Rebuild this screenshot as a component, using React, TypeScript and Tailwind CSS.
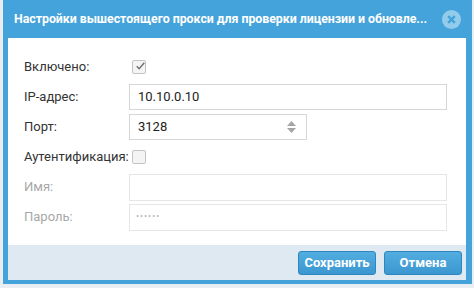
const font = { fontFamily: "Roboto, 'Noto Sans', sans-serif" };

function Row({
  label,
  disabled,
  children,
}: {
  label: string;
  disabled?: boolean;
  children: React.ReactNode;
}) {
  return (
    <div className="flex items-center h-[26px]">
      <div
        className={`w-[105px] shrink-0 text-[13px] ${
          disabled ? "text-[#a8a8a8]" : "text-[#333]"
        }`}
      >
        {label}
      </div>
      {children}
    </div>
  );
}

function CheckBox({ checked }: { checked?: boolean }) {
  return (
    <div className="ml-[3px] w-[14px] h-[14px] border border-[#c4c4c4] bg-[#f4f4f4] rounded-[2px] flex items-center justify-center">
      {checked && (
        <svg width="14" height="14" viewBox="0 0 14 14" className="-mt-[3px] ml-[2px]">
          <path d="M2.5 7.5 L5.8 10.8 L13 2.5" fill="none" stroke="#707070" strokeWidth="2" />
        </svg>
      )}
    </div>
  );
}

export default function App() {
  return (
    <div className="w-[474px] h-[288px] bg-[#e9eef2] pl-[3px] pr-[2px] pb-[4px]" style={font}>
      <div className="h-full bg-[#43a3da] flex flex-col">
        {/* Title */}
        <div className="h-[38px] shrink-0 flex items-center pl-[11px] pr-[11px]">
          <div className="flex-1 whitespace-nowrap overflow-hidden text-white font-bold text-[12.4px] tracking-[-0.05px]">
            Настройки вышестоящего прокси для проверки лицензии и обновле...
          </div>
          <div className="w-[19px] h-[19px] rounded-full bg-[#93cbeb] flex items-center justify-center ml-[8px]">
            <svg width="9" height="9" viewBox="0 0 9 9">
              <path d="M1.2 1.2 L7.8 7.8 M7.8 1.2 L1.2 7.8" stroke="#43a3da" strokeWidth="2.4" />
            </svg>
          </div>
        </div>

        {/* Body */}
        <div className="flex-1 ml-[5px] mr-[6px] bg-white flex flex-col">
          <div className="flex-1 pt-[16px] pl-[16px] pr-[19px] flex flex-col gap-[4px]">
            <Row label="Включено:">
              <CheckBox checked />
            </Row>
            <Row label="IP-адрес:">
              <div className="flex-1 h-[26px] border border-[#d6d6d6] flex items-center px-[8px] text-[13px] text-[#222]">
                10.10.0.10
              </div>
            </Row>
            <Row label="Порт:">
              <div className="w-[178px] h-[26px] border border-[#d6d6d6] flex items-center px-[8px] text-[13px] text-[#222]">
                <span className="flex-1">3128</span>
                <div className="flex flex-col items-center gap-[2px] mr-[2px]">
                  <svg width="9" height="5" viewBox="0 0 9 5">
                    <path d="M0 5 L4.5 0 L9 5 Z" fill="#a5a5a5" />
                  </svg>
                  <svg width="9" height="5" viewBox="0 0 9 5">
                    <path d="M0 0 L4.5 5 L9 0 Z" fill="#a5a5a5" />
                  </svg>
                </div>
              </div>
            </Row>
            <Row label="Аутентификация:">
              <CheckBox />
            </Row>
            <Row label="Имя:" disabled>
              <div className="flex-1 h-[27px] border border-[#e6e6e6]" />
            </Row>
            <Row label="Пароль:" disabled>
              <div className="flex-1 h-[27px] border border-[#e6e6e6] flex items-center px-[6px] text-[9px] tracking-[1px] text-[#b5b5b5]">
                ••••••
              </div>
            </Row>
          </div>

          {/* Footer */}
          <div className="h-[35px] shrink-0 bg-[#dfe9f1] flex items-center justify-end gap-[8px] pr-[4px]">
            <button className="w-[78px] h-[24px] rounded-[3px] border border-[#2f86bf] bg-gradient-to-b from-[#52ade0] to-[#3b97d0] text-white font-bold text-[13px]">
              Сохранить
            </button>
            <button className="w-[78px] h-[24px] rounded-[3px] border border-[#2f86bf] bg-gradient-to-b from-[#52ade0] to-[#3b97d0] text-white font-bold text-[13px]">
              Отмена
            </button>
          </div>
        </div>
        <div className="h-[4px] shrink-0" />
      </div>
    </div>
  );
}
